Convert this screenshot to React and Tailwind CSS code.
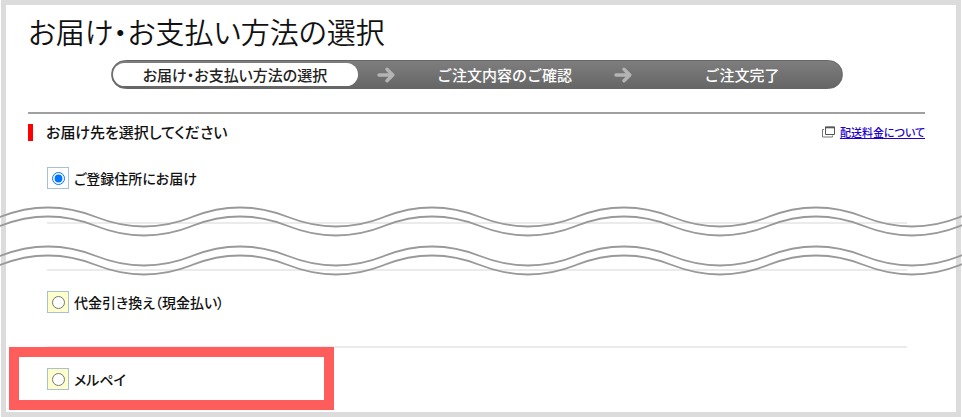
import React, { useState } from 'react';

const steps = ['お届け・お支払い方法の選択', 'ご注文内容のご確認', 'ご注文完了'];

const StepArrow = () => (
  <svg className="w-[18px] h-[16px] shrink-0" viewBox="0 0 18 16" fill="none" stroke="#b4b4b4" strokeWidth="3.4" strokeLinecap="round" strokeLinejoin="round" aria-hidden="true">
    <path d="M2 8H15M10 2.2L15.8 8L10 13.8" />
  </svg>
);

const WindowIcon = () => (
  <svg className="w-[13px] h-[12px] shrink-0" viewBox="0 0 13 12" fill="none" stroke="#555" aria-hidden="true">
    <path d="M3.5 1H12.5V8.5H3.5Z" />
    <path d="M3 1.5H13" strokeWidth="1.6" />
    <path d="M2 3.5H0.5V11H10.5V9.5" stroke="#777" />
  </svg>
);

const Waves = () => (
  <svg className="absolute left-0 top-[206px] w-full h-[72px] pointer-events-none" aria-hidden="true">
    <defs>
      <pattern id="wave" width="192" height="72" patternUnits="userSpaceOnUse">
        <g fill="none" stroke="#999" strokeWidth="1.8">
          <path d="M-4 12.5L0 11Q48 -8 96 11T192 11L196 9.5" />
          <path d="M-4 21.5L0 20Q48 1 96 20T192 20L196 18.5" />
          <path d="M-4 51.5L0 50Q48 31 96 50T192 50L196 48.5" />
          <path d="M-4 60.5L0 59Q48 40 96 59T192 59L196 57.5" />
        </g>
      </pattern>
    </defs>
    <rect width="100%" height="72" fill="url(#wave)" />
  </svg>
);

const Option = ({ value, label, selected, onSelect }) => {
  const checked = selected === value;
  return (
    <label className="flex items-center gap-[5px] text-sm leading-5 font-medium text-[#111]">
      <span className={`flex items-center justify-center size-[22px] border border-[#a9bfd3] ${checked ? "bg-white" : "bg-[#ffffcc]"}`}>
        <input type="radio" name="option" value={value} checked={checked} onChange={() => onSelect(value)} className="m-0 size-[13px] accent-[#0075ff]" />
      </span>
      {label}
    </label>
  );
};

const App = () => {
  const [selected, setSelected] = useState('registered');

  return (
    <div className="relative bg-white text-[#111] font-['Noto_Sans_CJK_JP','Liberation_Sans',sans-serif] [font-feature-settings:'palt']">
      <main className="mx-px border-[5px] border-[#dcdcdc] pl-[22px] pr-[31px]">
        <h1 className="pt-[6px] text-[29px] leading-[40px] font-[350]">{steps[0]}</h1>

        <ol className="mx-auto mt-[9px] flex max-w-[732px] h-[29px] items-center rounded-full border border-[#666] bg-linear-to-b from-[#7e7e7e] to-[#666] px-px text-[15px] leading-5 font-medium text-white">
          <li className="flex h-[23px] w-[245px] items-center justify-center rounded-full bg-white text-[#222]">{steps[0]}</li>
          <li className="flex flex-1 items-center justify-between pl-[19px]">
            <StepArrow />
            <span className="[font-feature-settings:normal]">{steps[1]}</span>
            <StepArrow />
          </li>
          <li className="w-[208px] pl-[72px] [font-feature-settings:normal]">{steps[2]}</li>
        </ol>

        <section className="mt-[23px] border-t-2 border-[#a0a0a0]">
          <div className="flex items-center justify-between pt-2">
            <h2 className="flex items-center gap-[13px] text-[15px] leading-5 font-medium">
              <span className="h-[17px] w-[5px] bg-[#f00]" />
              お届け先を選択してください
            </h2>
            <div className="flex items-center gap-[5px]">
              <WindowIcon />
              <a href="#shipping" className="text-[11px] leading-4 font-medium text-[#20c] underline">配送料金について</a>
            </div>
          </div>

          <ul className="ml-[19px] mr-[18px]">
            <li className="border-b-2 border-[#ebebeb] pt-[25px] pb-[33px]">
              <Option value="registered" label="ご登録住所にお届け" selected={selected} onSelect={setSelected} />
            </li>
            <li className="h-[47px] border-b-2 border-[#ebebeb]" />
            <li className="border-b-2 border-[#ebebeb] pt-[20px] pb-[33px]">
              <Option value="cod" label="代金引き換え（現金払い）" selected={selected} onSelect={setSelected} />
            </li>
            <li className="relative pt-[20px] pb-[22px]">
              <Option value="merpay" label="メルペイ" selected={selected} onSelect={setSelected} />
              <span className="absolute -left-[38px] -top-px h-[63px] w-[325px] border-10 border-[#ff5c5c] pointer-events-none" />
            </li>
          </ul>
        </section>
      </main>
      <Waves />
    </div>
  );
};

export default App;
